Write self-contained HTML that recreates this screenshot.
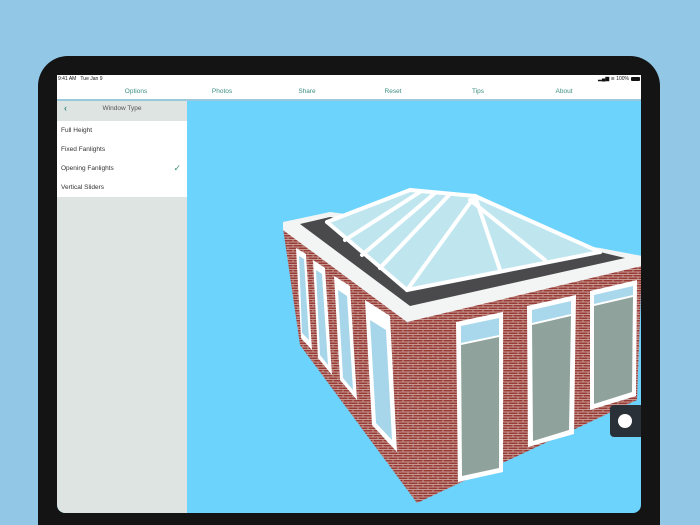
<!DOCTYPE html>
<html style="width:700px;height:525px;overflow:hidden"><head><meta charset="utf-8"><style>
*{margin:0;padding:0;box-sizing:border-box}
body{width:700px;height:525px;overflow:hidden;background:#93c7e6;font-family:"Liberation Sans",sans-serif;position:relative}
.bezel{position:absolute;left:38px;top:56px;width:622px;height:469px;background:#141414;border-radius:30px 30px 0 0}
.screen{position:absolute;left:57px;top:75px;width:584px;height:438px;background:#6cd3fd;border-radius:0 0 8px 8px;overflow:hidden}
.status{position:absolute;left:0;top:0;width:584px;height:9px;background:#fff;font-size:5px;color:#111}
.nav{position:absolute;left:0;top:9px;width:584px;height:17px;background:#fff;border-bottom:2px solid #9ac9de}
.nav span{position:absolute;top:4px;font-size:6.5px;color:#3c8f80;transform:translateX(-50%)}
.side{position:absolute;left:0;top:26px;width:130px;height:412px;background:#dde4e2;border-bottom-left-radius:8px}
.hdr{height:20px;font-size:6.5px;color:#555;text-align:center;line-height:15px;position:relative}
.items{background:#fff}
.items div{height:19px;font-size:6.5px;color:#333;padding-left:4px;line-height:19px;position:relative}
</style></head><body>
<div class="bezel"></div>
<div class="screen">
<svg width="584" height="438" style="position:absolute;left:0;top:0" viewBox="57 75 584 438">
<defs>
<pattern id="br" width="10" height="5" patternUnits="userSpaceOnUse">
<rect width="10" height="5" fill="#9a3a36"/>
<path d="M0 4.5H10M0 2H10M3 0V2M8 2V4.5" stroke="#d2b8b0" stroke-width="0.7"/>
</pattern>
</defs>
<polygon points="283,228 407,318 417,503 300,345" fill="url(#br)"/>
<polygon points="407,318 642,262 637,400 417,503" fill="url(#br)"/>
<g fill="#fff">
<polygon points="456,322 503,312 503,472 458,482"/>
<polygon points="527,306 576,295 574,434 528,447"/>
<polygon points="590,291 637,280 636,396 590,410"/>
</g>
<g fill="#8fa39c">
<polygon points="461,345 499,337 499,468 462,476"/>
<polygon points="532,325 571,316 569,430 533,441"/>
<polygon points="594,306 633,297 632,392 594,404"/>
</g>
<g fill="#a9d8ec">
<polygon points="461,326 499,318 499,335 461,343"/>
<polygon points="532,310 571,301 571,314 532,323"/>
<polygon points="594,295 633,286 633,295 594,304"/>
</g>
<g fill="#fff">
<polygon points="296,248 306,254 312,350 301,338"/>
<polygon points="313,260 325,268 332,375 318,358"/>
<polygon points="334,276 350,286 357,400 340,380"/>
<polygon points="365,300 390,316 397,452 372,425"/>
</g>
<g fill="#a7d6ea">
<polygon points="299,256 304,259 309,340 302,333"/>
<polygon points="316,270 322,274 328,365 320,355"/>
<polygon points="338,290 347,296 353,390 343,378"/>
<polygon points="370,320 386,330 392,440 376,423"/>
</g>
<polygon points="283,222 330,212 600,248 642,256 642,266 407,322 283,230" fill="#f3f5f4"/>
<polygon points="300,224 330,217 600,252 625,258 410,306" fill="#4a4a4c"/>
<polygon points="327,222 410,188 475,195 600,252 407,290" fill="#bfe6ef"/>
<g stroke="#fff" stroke-width="4" stroke-linecap="round">
<line x1="327" y1="222" x2="407" y2="290"/><line x1="407" y1="290" x2="600" y2="252"/>
<line x1="410" y1="190" x2="475" y2="196"/>
<line x1="475" y1="196" x2="407" y2="290"/><line x1="475" y1="196" x2="600" y2="252"/>
<line x1="475" y1="196" x2="500" y2="270"/>
<line x1="410" y1="190" x2="327" y2="222"/>
<line x1="420" y1="192" x2="345" y2="240"/><line x1="435" y1="193" x2="362" y2="255"/>
<line x1="450" y1="194" x2="380" y2="268"/><line x1="470" y1="200" x2="545" y2="260"/>
</g>
<rect x="610" y="405" width="34" height="32" rx="4" fill="#2a3038"/>
<circle cx="625" cy="421" r="7" fill="#fff"/>
</svg>
<div class="status"><span style="position:absolute;left:1px;top:1px">9:41 AM&nbsp;&nbsp; Tue Jan 9</span><span style="position:absolute;right:12px;top:1px">▂▄▆ ≋ 100%</span><span style="position:absolute;right:1px;top:2px;width:9px;height:4px;background:#111;border-radius:1px"></span></div>
<div class="nav">
<span style="left:79px">Options</span><span style="left:165px">Photos</span><span style="left:250px">Share</span><span style="left:336px">Reset</span><span style="left:421px">Tips</span><span style="left:507px">About</span>
</div>
<div class="side">
<div class="hdr"><span style="position:absolute;left:7px;color:#3c8f80;font-weight:bold;font-size:9px">‹</span>Window Type</div>
<div class="items">
<div>Full Height</div><div>Fixed Fanlights</div>
<div>Opening Fanlights<span style="position:absolute;right:6px;color:#3c8f80;font-size:9px">✓</span></div>
<div>Vertical Sliders</div>
</div>
</div>
</div>
</body></html>
